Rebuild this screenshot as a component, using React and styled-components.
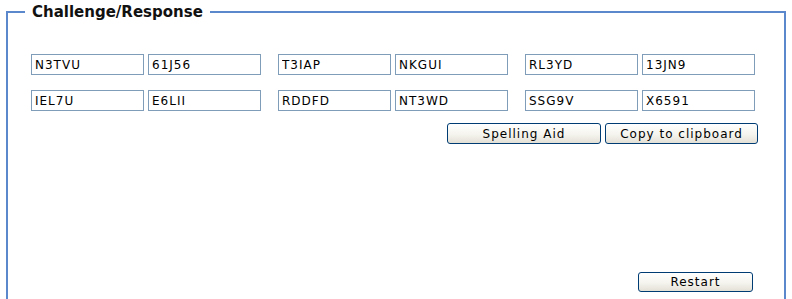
import React from 'react'
import styled, { createGlobalStyle } from 'styled-components'

const GlobalStyle = createGlobalStyle`
  html, body {
    margin: 0;
    padding: 0;
    background: #fff;
    overflow: hidden;
  }
  body {
    font-family: "DejaVu Sans", Verdana, sans-serif;
  }
`

const Panel = styled.fieldset`
  box-sizing: border-box;
  margin: 3px 6px 0;
  padding: 0 26px 0 23px;
  height: 296px;
  border: 2px solid #5b88cc;
  border-bottom: none;
`

const Title = styled.legend`
  margin-left: -6px;
  padding: 0 7px;
  font: bold 15px/18px "DejaVu Sans", Verdana, sans-serif;
  color: #111;
`

const Rows = styled.div`
  display: flex;
  flex-direction: column;
  gap: 15px;
  margin-top: 33px;
`

const Row = styled.div`
  display: flex;
  gap: 17px;
`

const Pair = styled.div`
  display: flex;
  gap: 4px;
`

const Field = styled.input`
  box-sizing: border-box;
  width: 113px;
  height: 21px;
  margin: 0;
  padding: 0 3px;
  border: 1px solid #7f9db9;
  background: #fff;
  color: #000;
  font: 12px "DejaVu Sans", Verdana, sans-serif;
  letter-spacing: 1px;
  outline: none;
`

const Actions = styled.div`
  display: flex;
  justify-content: flex-end;
  gap: 4px;
  margin-top: ${p => p.$top}px;
  padding-right: ${p => p.$inset || 0}px;
`

const Button = styled.button`
  box-sizing: border-box;
  width: ${p => p.$w}px;
  height: ${p => p.$h || 21}px;
  margin: 0;
  padding: 0;
  border: 1px solid #003c74;
  border-radius: 3px;
  background: linear-gradient(#ffffff, #f5f4ee 55%, #e3e0d6);
  color: #000;
  font: 12px "DejaVu Sans", Verdana, sans-serif;
  letter-spacing: 1px;
  cursor: pointer;
`

const codes = [
  ['N3TVU', '61J56', 'T3IAP', 'NKGUI', 'RL3YD', '13JN9'],
  ['IEL7U', 'E6LII', 'RDDFD', 'NT3WD', 'SSG9V', 'X6591'],
]

export default function App() {
  return (
    <>
      <GlobalStyle />
      <Panel>
        <Title>Challenge/Response</Title>
        <Rows>
          {codes.map((row, r) => (
            <Row key={r}>
              {[0, 2, 4].map(i => (
                <Pair key={i}>
                  <Field defaultValue={row[i]} />
                  <Field defaultValue={row[i + 1]} />
                </Pair>
              ))}
            </Row>
          ))}
        </Rows>
        <Actions $top={12}>
          <Button $w={154}>Spelling Aid</Button>
          <Button $w={153}>Copy to clipboard</Button>
        </Actions>
        <Actions $top={128} $inset={5}>
          <Button $w={115} $h={20}>Restart</Button>
        </Actions>
      </Panel>
    </>
  )
}
